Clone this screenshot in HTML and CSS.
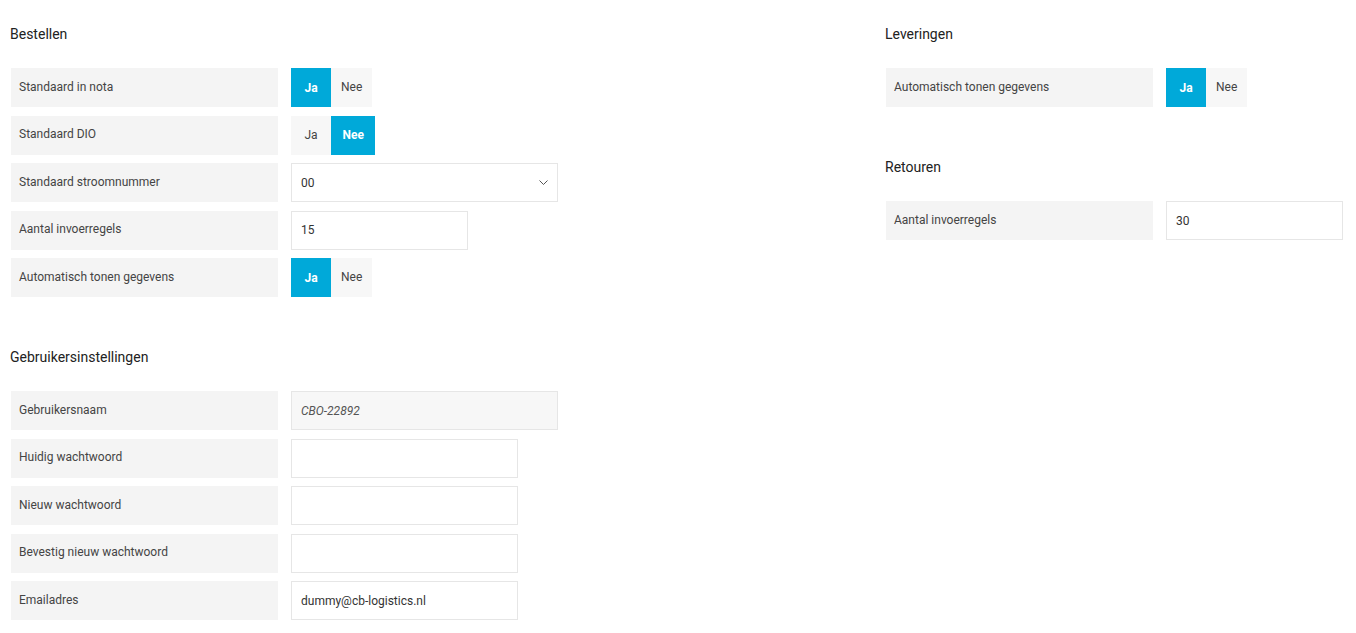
FILE: index.html
```html
<!DOCTYPE html>
<html lang="nl">
<head>
    <meta charset="UTF-8">
    <title>Instellingen</title>
    <link rel="stylesheet" href="styles.css">
</head>
<body>
    <div class="page">
        <div class="column">
            <section class="group">
                <h2>Bestellen</h2>
                <div class="field">
                    <div class="label">Standaard in nota</div>
                    <div class="toggle"><span class="opt on">Ja</span><span class="opt">Nee</span></div>
                </div>
                <div class="field">
                    <div class="label">Standaard DIO</div>
                    <div class="toggle"><span class="opt">Ja</span><span class="opt on">Nee</span></div>
                </div>
                <div class="field">
                    <div class="label">Standaard stroomnummer</div>
                    <div class="select">
                        <select class="input wide">
                            <option>00</option>
                        </select>
                        <svg class="chevron" width="9" height="5" viewBox="0 0 9 5"><path d="M0.5 0.5 L4.5 4.5 L8.5 0.5" fill="none" stroke="#555" stroke-width="1"/></svg>
                    </div>
                </div>
                <div class="field">
                    <div class="label">Aantal invoerregels</div>
                    <input class="input small" type="text" value="15">
                </div>
                <div class="field">
                    <div class="label">Automatisch tonen gegevens</div>
                    <div class="toggle"><span class="opt on">Ja</span><span class="opt">Nee</span></div>
                </div>
            </section>

            <section class="group">
                <h2>Gebruikersinstellingen</h2>
                <div class="field">
                    <div class="label">Gebruikersnaam</div>
                    <input class="input wide readonly" type="text" value="CBO-22892" readonly>
                </div>
                <div class="field">
                    <div class="label">Huidig wachtwoord</div>
                    <input class="input medium" type="password">
                </div>
                <div class="field">
                    <div class="label">Nieuw wachtwoord</div>
                    <input class="input medium" type="password">
                </div>
                <div class="field">
                    <div class="label">Bevestig nieuw wachtwoord</div>
                    <input class="input medium" type="password">
                </div>
                <div class="field">
                    <div class="label">Emailadres</div>
                    <input class="input medium" type="text" value="dummy@cb-logistics.nl">
                </div>
            </section>
        </div>

        <div class="column">
            <section class="group">
                <h2>Leveringen</h2>
                <div class="field">
                    <div class="label">Automatisch tonen gegevens</div>
                    <div class="toggle"><span class="opt on">Ja</span><span class="opt">Nee</span></div>
                </div>
            </section>

            <section class="group">
                <h2>Retouren</h2>
                <div class="field">
                    <div class="label">Aantal invoerregels</div>
                    <input class="input small" type="text" value="30">
                </div>
            </section>
        </div>
    </div>
</body>
</html>
```

FILE: styles.css
```css
body {
    margin: 0;
    background: #fff;
    font-family: Roboto, "Liberation Sans", sans-serif;
    color: #444;
}

.page {
    display: grid;
    grid-template-columns: 875px 1fr;
    padding: 24px 13px 0 11px;
}

.group + .group {
    margin-top: 50px;
}

h2 {
    margin: 0 0 24px -1px;
    font-size: 14px;
    line-height: 20px;
    font-weight: 400;
    color: #222;
}

.field {
    display: flex;
    gap: 13px;
    height: 39px;
    margin-bottom: 8.5px;
}

.label {
    width: 267px;
    box-sizing: border-box;
    padding: 0 8px 2px;
    display: flex;
    align-items: center;
    background-color: #f4f4f4;
    font-size: 12px;
    color: #444;
}

.toggle {
    display: flex;
}

.opt {
    min-width: 40px;
    box-sizing: border-box;
    padding: 0 10px 1px;
    display: flex;
    align-items: center;
    justify-content: center;
    background-color: #f7f7f7;
    font-size: 12px;
    color: #444;
}

.opt.on {
    padding: 0 11.5px;
    background-color: #00a9d9;
    color: #fff;
    font-weight: 700;
}

.input {
    height: 39px;
    box-sizing: border-box;
    margin: 0;
    padding: 0 9px;
    border: 1px solid #e6e6e6;
    border-radius: 0;
    background: #fff;
    font-family: Roboto, "Liberation Sans", sans-serif;
    font-size: 12px;
    color: #333;
    outline: none;
}

.input.wide {
    width: 267px;
}

.input.medium {
    width: 227px;
}

.input.small {
    width: 177px;
}

.input.readonly {
    background-color: #f7f7f7;
    font-style: italic;
    color: #555;
}

.select {
    position: relative;
}

.select select {
    appearance: none;
    -webkit-appearance: none;
}

.chevron {
    position: absolute;
    right: 10px;
    top: 17px;
    pointer-events: none;
}
```
